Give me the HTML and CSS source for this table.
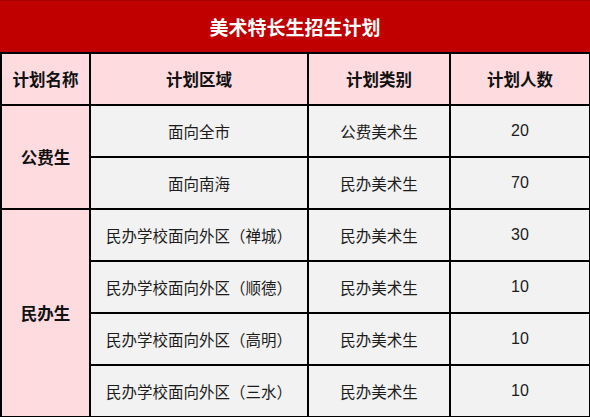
FILE: index.html
```html
<!DOCTYPE html>
<html lang="zh">
<head>
<meta charset="utf-8">
<link rel="stylesheet" href="styles.css">
</head>
<body>
<div class="sheet">
  <div class="title">美术特长生招生计划</div>
  <table class="plan">
    <colgroup>
      <col class="c1"><col class="c2"><col class="c3"><col class="c4">
    </colgroup>
    <thead>
      <tr><th>计划名称</th><th>计划区域</th><th>计划类别</th><th>计划人数</th></tr>
    </thead>
    <tbody>
      <tr><th rowspan="2" class="group">公费生</th><td>面向全市</td><td>公费美术生</td><td class="num">20</td></tr>
      <tr><td>面向南海</td><td>民办美术生</td><td class="num">70</td></tr>
      <tr><th rowspan="4" class="group">民办生</th><td>民办学校面向外区（禅城）</td><td>民办美术生</td><td class="num">30</td></tr>
      <tr><td>民办学校面向外区（顺德）</td><td>民办美术生</td><td class="num">10</td></tr>
      <tr><td>民办学校面向外区（高明）</td><td>民办美术生</td><td class="num">10</td></tr>
      <tr><td>民办学校面向外区（三水）</td><td>民办美术生</td><td class="num">10</td></tr>
    </tbody>
  </table>
</div>
</body>
</html>
```

FILE: styles.css
```css
html, body {
  margin: 0;
  padding: 0;
  background: #ffffff;
}
.sheet {
  width: 590px;
  font-family: "Noto Sans CJK SC", "Noto Sans", sans-serif;
}
.title {
  height: 52px;
  background: #c00000;
  border-top: 1px solid #a80000;
  box-sizing: border-box;
  color: #ffffff;
  font-weight: bold;
  font-size: 19px;
  display: flex;
  align-items: center;
  justify-content: center;
}
.plan {
  width: 589px;
  border-collapse: collapse;
  table-layout: fixed;
}
.c1 { width: 89px; }
.c2 { width: 218px; }
.c3 { width: 142px; }
.c4 { width: 140px; }
.plan th, .plan td {
  border: 2px solid #000000;
  height: 50px;
  padding: 0;
  text-align: center;
  vertical-align: middle;
}
.plan thead th {
  background: #fddbdf;
  font-size: 16.5px;
  font-weight: bold;
  color: #111111;
}
.plan .group {
  background: #fddbdf;
  font-size: 16.5px;
  font-weight: bold;
  color: #111111;
}
.plan td {
  background: #f2f2f2;
  font-size: 15.5px;
  color: #1c1c1c;
}
.plan td.num {
  font-family: "Liberation Sans", Arial, sans-serif;
  font-size: 16px;
}
```
